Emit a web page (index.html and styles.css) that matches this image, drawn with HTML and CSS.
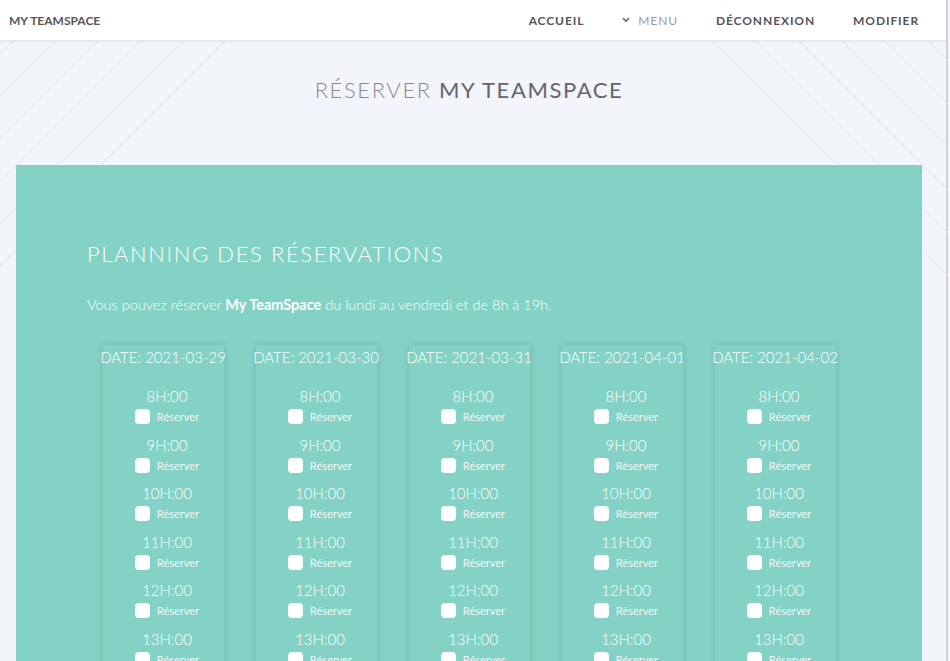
FILE: index.html
```html
<!DOCTYPE html>
<html lang="fr">
<head>
<meta charset="utf-8">
<title>Réserver My TeamSpace</title>
<link rel="stylesheet" href="styles.css">
</head>
<body>
<div class="page">
  <header class="topbar">
    <div class="brand">MY TEAMSPACE</div>
    <nav class="nav">
      <a class="nav-link">ACCUEIL</a>
      <a class="nav-link menu"><svg class="chev" width="8" height="6" viewBox="0 0 8 6"><path d="M1 1.2 L4 4.2 L7 1.2" fill="none" stroke="#777" stroke-width="1.8"/></svg>MENU</a>
      <a class="nav-link">DÉCONNEXION</a>
      <a class="nav-link">MODIFIER</a>
    </nav>
  </header>
  <main class="content">
    <svg class="lines" width="948" height="320" viewBox="0 0 948 320">
      <g stroke="#e1e5ec" stroke-width="1">
        <line x1="13" y1="0" x2="-307" y2="320"/>
        <line x1="55" y1="0" x2="-265" y2="320"/>
        <line x1="98" y1="0" x2="-222" y2="320"/>
        <line x1="140" y1="0" x2="-180" y2="320"/>
        <line x1="183" y1="0" x2="-137" y2="320"/>
        <line x1="225" y1="0" x2="-95" y2="320"/>
        <line x1="713" y1="0" x2="1033" y2="320"/>
        <line x1="756" y1="0" x2="1076" y2="320"/>
        <line x1="799" y1="0" x2="1119" y2="320"/>
        <line x1="842" y1="0" x2="1162" y2="320"/>
        <line x1="885" y1="0" x2="1205" y2="320"/>
        <line x1="928" y1="0" x2="1248" y2="320"/>
      </g>
    </svg>
    <section class="hero">
      <h1 class="title"><span class="light">RÉSERVER</span> MY TEAMSPACE</h1>
    </section>
    <section class="planning">
      <h2 class="planning-title">PLANNING DES RÉSERVATIONS</h2>
      <p class="intro">Vous pouvez réserver <strong>My TeamSpace</strong> du lundi au vendredi et de 8h à 19h.</p>
      <div class="days" id="days"></div>
    </section>
  </main>
</div>
<script src="app.js"></script>
</body>
</html>
```
FILE: app.js
```js
const dates = ["2021-03-29","2021-03-30","2021-03-31","2021-04-01","2021-04-02"];
const hours = [8,9,10,11,12,13,14,15,16,17,18];
const days = document.getElementById("days");
dates.forEach(d => {
  const card = document.createElement("div");
  card.className = "day";
  let html = '<div class="date">DATE: ' + d + '</div><div class="slots">';
  hours.forEach(h => {
    html += '<div class="slot"><div class="time">' + h + 'H:00</div>' +
      '<label class="check"><span class="box"></span><span class="check-label">Réserver</span></label></div>';
  });
  html += '</div>';
  card.innerHTML = html;
  days.appendChild(card);
});
```
FILE: styles.css
```css
* { box-sizing: border-box; }
html, body { margin: 0; padding: 0; }
body {
  font-family: Lato, "Open Sans", sans-serif;
  background: #f2f5fa;
  overflow: hidden;
}
.page {
  width: 948px;
  border-right: 2px solid #cfd1d4;
  min-height: 661px;
  background: #f2f5fa;
}
.topbar {
  height: 41px;
  background: #fff;
  border-bottom: 1px solid #e4e6ea;
  box-shadow: 0 1px 2px rgba(0,0,0,0.04);
  display: flex;
  align-items: center;
  justify-content: space-between;
  padding: 0 27px 0 9px;
  position: relative;
  z-index: 2;
}
.brand {
  font-weight: 700;
  font-size: 12px;
  color: #555;
  letter-spacing: 0;
}
.nav { display: flex; align-items: center; gap: 38px; }
.nav-link {
  font-size: 12px;
  font-weight: 700;
  letter-spacing: 0.9px;
  color: #555;
}
.menu {
  font-weight: 400;
  color: #9a9a9a;
  display: flex;
  align-items: center;
  gap: 8px;
}
.content {
  position: relative;
  width: 938px;
}
.lines {
  position: absolute;
  top: 0;
  left: 0;
  z-index: 0;
}
.hero {
  position: relative;
  z-index: 1;
  height: 124px;
  padding-top: 36px;
}
.title {
  margin: 0;
  text-align: center;
  font-size: 22px;
  line-height: 26px;
  font-weight: 400;
  letter-spacing: 1.6px;
  color: #666;
}
.title .light { font-weight: 300; color: #8a8a8a; }
.planning {
  position: relative;
  z-index: 1;
  margin: 0 16px;
  background: #83d2c5;
  padding: 76px 0 40px 71px;
  color: #fff;
  min-height: 600px;
}
.planning-title {
  margin: 0;
  font-size: 22px;
  line-height: 26px;
  font-weight: 300;
  letter-spacing: 1.6px;
}
.intro {
  margin: 28px 0 0;
  font-size: 14.5px;
  line-height: 20px;
  font-weight: 300;
}
.intro strong { font-weight: 700; }
.days {
  margin: 30px 0 0 -71px;
  display: flex;
  justify-content: center;
  gap: 32px;
}
.day {
  width: 121px;
  padding-top: 2px;
  box-shadow: 0 0 7px rgba(0,0,0,0.13);
  display: flex;
  flex-direction: column;
  align-items: center;
}
.date {
  font-size: 15px;
  line-height: 20px;
  font-weight: 300;
  white-space: nowrap;
}
.slots { margin-top: 19px; width: 100%; }
.slot {
  height: 48.5px;
  display: flex;
  flex-direction: column;
  align-items: center;
  padding-left: 8px;
}
.time {
  font-size: 15px;
  line-height: 20px;
  font-weight: 300;
}
.check {
  margin-top: 3px;
  display: flex;
  align-items: center;
  gap: 7px;
}
.box {
  width: 15px;
  height: 15px;
  border-radius: 4px;
  background: #fff;
}
.check-label {
  font-size: 11px;
  line-height: 15px;
  color: #f6f6f6;
}
```
